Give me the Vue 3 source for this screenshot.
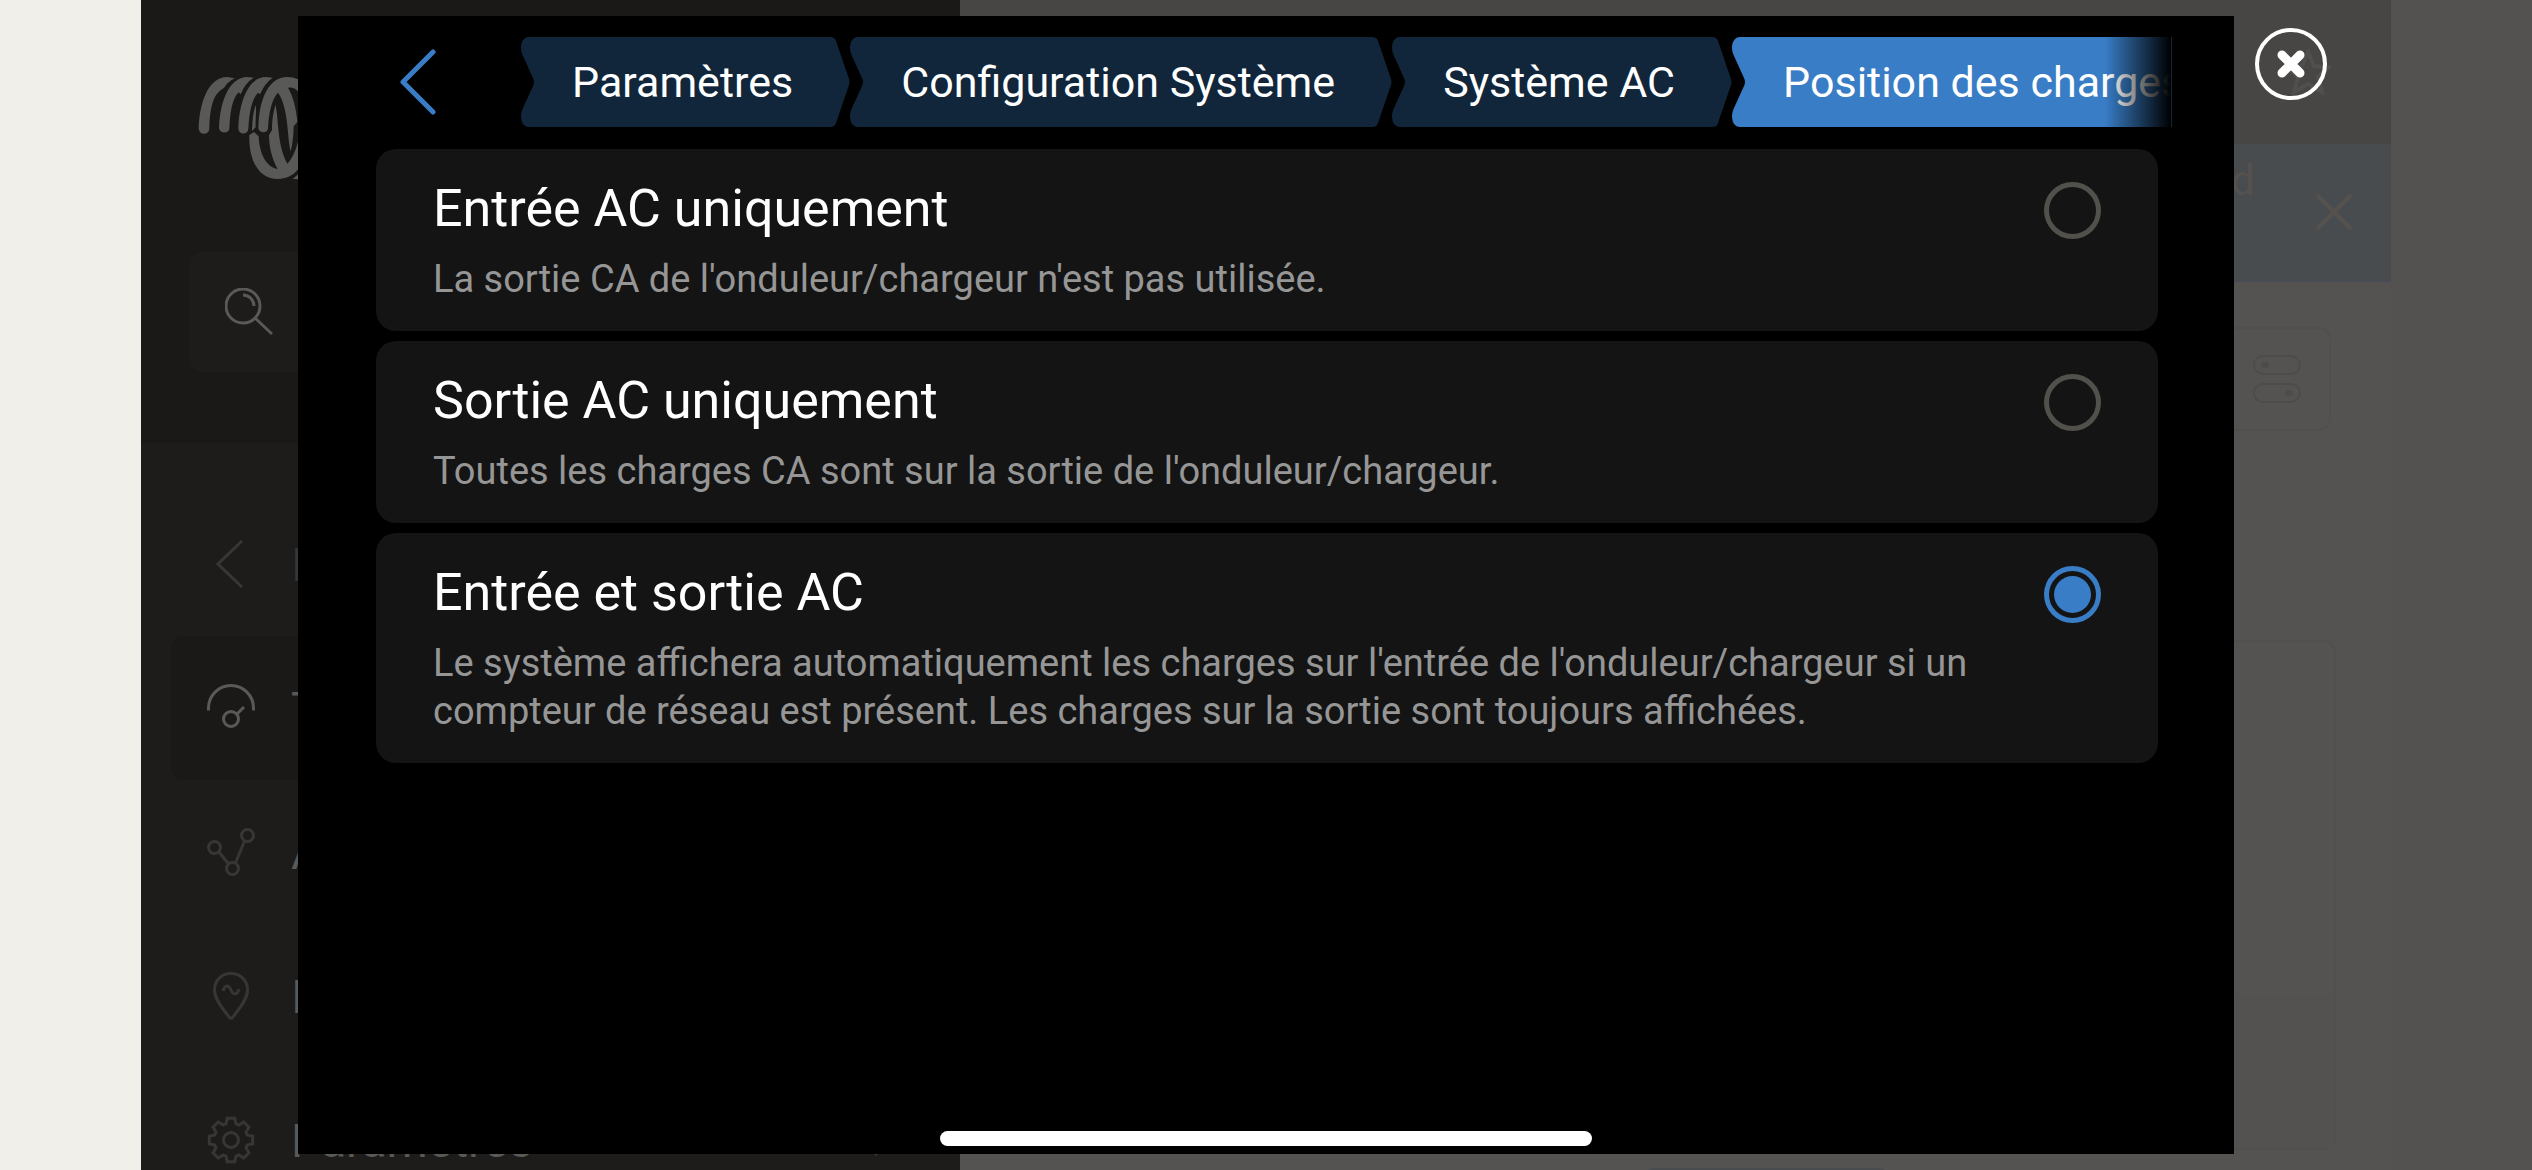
<script setup>
import { ref } from "vue";

const selected = ref("both");

const crumbs = [
  { label: "Paramètres" },
  { label: "Configuration Système" },
  { label: "Système AC" },
  { label: "Position des charges", active: true },
];

const options = [
  {
    value: "input",
    title: "Entrée AC uniquement",
    text: "La sortie CA de l'onduleur/chargeur n'est pas utilisée.",
  },
  {
    value: "output",
    title: "Sortie AC uniquement",
    text: "Toutes les charges CA sont sur la sortie de l'onduleur/chargeur.",
  },
  {
    value: "both",
    title: "Entrée et sortie AC",
    text: "Le système affichera automatiquement les charges sur l'entrée de l'onduleur/chargeur si un compteur de réseau est présent. Les charges sur la sortie sont toujours affichées.",
  },
];

const menu = [
  { icon: "back", label: "I", muted: true },
  { icon: "gauge", label: "T", active: true },
  { icon: "nodes", label: "A" },
  { icon: "pin", label: "I" },
  { icon: "gear", label: "Paramètres", expandable: true },
];

// outline of the eight-tooth settings wheel in a 48px box
const gearPath = (() => {
  const points = [];
  for (let i = 0; i < 8; i++) {
    const middle = (i * Math.PI) / 4;
    [
      [-0.3, 17],
      [-0.17, 22],
      [0.17, 22],
      [0.3, 17],
    ].forEach(([offset, radius]) => {
      const x = 24 + radius * Math.sin(middle + offset);
      const y = 24 - radius * Math.cos(middle + offset);
      points.push(`${x.toFixed(1)} ${y.toFixed(1)}`);
    });
  }
  return `M${points.join("L")}Z`;
})();
</script>

<template>
  <div class="screen">
    <!-- Dimmed page -->
    <div class="page">
      <div class="edge-left"></div>

      <aside class="sidebar">
        <div class="sidebar-top">
          <svg class="logo" viewBox="177 231 327 312" aria-hidden="true">
            <path d="M206 385C208 315 232 231 292 231L314 235Q292 246 282 264C246 282 240 330 238 386A16 16 0 0 1 206 385Z" />
            <path d="M267 385C269 315 293 231 353 231L371 233Q345 249 332 283L326 277C306 296 300 340 298 386A16 16 0 0 1 267 385Z" />
            <path d="M325 385C327 315 351 231 408 231L428 233Q404 250 390 283L384 278C364 300 358 340 355 386A15 15 0 0 1 325 385Z" />
            <path d="M385 385C387 300 414 231 472 231Q490 231 504 238V274Q492 260 474 263C489 288 499 325 502 366L491 379Q490 425 482 454C471 415 477 325 444 278C423 300 416 345 414 386A15 15 0 0 1 385 385Z" />
            <path d="M377 315C368 340 367 370 366 393L377 382C376 350 380 335 377 315Z" />
            <path d="M358 405L372 396L386 409C388 460 408 502 443 507C426 478 417 440 417 405L426 390C426 355 431 335 436 315C447 350 439 430 472 491Q492 470 504 425V508C490 527 468 537 443 537C385 537 356 480 358 405Z" />
            <path d="M488 537L504 523V538Z" />
          </svg>
          <label class="search">
            <svg class="icon" viewBox="0 0 48 48" aria-hidden="true">
              <circle cx="18" cy="18" r="17" />
              <path d="M18 7A11 11 0 0 1 29 18M30 30L47 46" />
            </svg>
            <input type="search" aria-label="Rechercher" />
          </label>
        </div>

        <nav class="menu">
          <a
            v-for="(item, index) in menu"
            :key="index"
            href="#"
            class="menu-item"
            :class="{ active: item.active, muted: item.muted }"
            @click.prevent
          >
            <svg class="icon" viewBox="0 0 48 48" aria-hidden="true">
              <path v-if="item.icon === 'back'" d="M35 1L11 24L35 47" />
              <g v-else-if="item.icon === 'gauge'">
                <path d="M1.5 26.5V24A22.5 22.5 0 0 1 46.5 24V26.5M30 30L37 23" />
                <circle cx="24" cy="35" r="7.5" />
              </g>
              <g v-else-if="item.icon === 'nodes'">
                <circle cx="7.5" cy="19.5" r="6" />
                <circle cx="25.5" cy="40.5" r="6" />
                <circle cx="40.5" cy="7.5" r="6" />
                <path d="M12 24L21.5 36M28.5 35L37.5 13" />
              </g>
              <g v-else-if="item.icon === 'pin'">
                <path d="M24 1.5C14 1.5 7.5 9 7.5 18C7.5 28 17 38 22 45Q24 47.5 26 45C31 38 40.5 28 40.5 18C40.5 9 34 1.5 24 1.5Z" />
                <path d="M16 19C18 12.5 21.5 12.5 24 18C26.5 23.5 30 23.5 32 17" />
              </g>
              <g v-else>
                <path :d="gearPath" />
                <circle cx="24" cy="24" r="7.5" />
              </g>
            </svg>
            <span class="menu-label">{{ item.label }}</span>
            <svg v-if="item.expandable" class="icon small" viewBox="0 0 36 36" aria-hidden="true">
              <path d="M4 18L18 32L32 18" />
            </svg>
          </a>
        </nav>
      </aside>

      <main class="main">
        <header class="main-header">
          <svg class="star" viewBox="0 0 46 46" aria-hidden="true">
            <path d="M23 3L29 17L44 18L33 28L37 43L23 35L9 43L13 28L2 18L17 17Z" />
          </svg>
        </header>
        <div class="banner">
          <span>d</span>
          <svg viewBox="0 0 38 38" aria-hidden="true">
            <path d="M2 2L36 36M36 2L2 36" />
          </svg>
        </div>
        <div class="toolbar">
          <div class="tool-box">
            <svg viewBox="0 0 48 48" aria-hidden="true">
              <rect x="1" y="1" width="46" height="18" rx="9" />
              <rect x="1" y="29" width="46" height="18" rx="9" />
              <ellipse class="dot" cx="12" cy="10" rx="4" ry="3" />
              <ellipse class="dot" cx="36" cy="38" rx="4" ry="3" />
            </svg>
          </div>
        </div>
        <div class="panel"><div class="panel-foot"></div></div>
        <div class="tab"></div>
      </main>

      <div class="edge-right"></div>
    </div>

    <!-- Remote console dialog -->
    <div class="overlay">
      <section class="dialog" role="dialog" aria-label="Position des charges">
        <header class="dialog-header">
          <button class="back" type="button" aria-label="Retour">
            <svg viewBox="0 0 36 66" aria-hidden="true">
              <path d="M33 3L3 33L33 63" />
            </svg>
          </button>
          <nav class="crumbs">
            <ol>
              <li v-for="crumb in crumbs" :key="crumb.label" :class="{ active: crumb.active }">
                <a href="#" @click.prevent>
                  <svg class="cap" viewBox="0 0 20 90" aria-hidden="true">
                    <path d="M8 0H20V90H8C2 90 0 84 0 79C0 76 1 73 2 71L12 49Q14 45 12 41L2 19C1 17 0 14 0 11C0 6 2 0 8 0Z" />
                  </svg>
                  <span>{{ crumb.label }}</span>
                  <svg class="cap" viewBox="0 0 20 90" aria-hidden="true">
                    <path d="M0 0C3 0 5 1 6 4L19 42Q20 45 19 48L6 86C5 89 3 90 0 90Z" />
                  </svg>
                </a>
              </li>
            </ol>
          </nav>
        </header>

        <div class="options">
          <label v-for="option in options" :key="option.value" class="option">
            <span class="option-body">
              <span class="option-title">{{ option.title }}</span>
              <span class="option-text">{{ option.text }}</span>
            </span>
            <input v-model="selected" type="radio" name="position" :value="option.value" />
          </label>
        </div>
      </section>

      <div class="overlay-side">
        <button class="close" type="button" aria-label="Fermer">
          <svg viewBox="0 0 72 72" aria-hidden="true">
            <circle cx="36" cy="36" r="34" />
            <path d="M27 27L45 45M45 27L27 45" />
          </svg>
        </button>
      </div>
    </div>

    <div class="home-indicator"></div>
  </div>
</template>

<style>
body {
  margin: 0;
}
</style>

<style scoped>
* {
  box-sizing: border-box;
}

.screen {
  position: relative;
  height: 100vh;
  overflow: hidden;
  font-family: Roboto, "Liberation Sans", sans-serif;
}

button {
  padding: 0;
  border: none;
  background: none;
  cursor: pointer;
}

a {
  color: inherit;
  text-decoration: none;
}

svg {
  display: block;
  flex: none;
  fill: none;
}

/* Dimmed page */
.page {
  display: flex;
  height: 100%;
}

.edge-left {
  width: 141px;
  background: #f0efea;
}

.edge-right {
  width: 141px;
  background: #545250;
}

.sidebar {
  width: 819px;
  background: #1e1c1a;
}

.sidebar-top {
  padding: 77px 48px 71px;
  background: #1a1917;
}

.logo {
  width: 109px;
  height: 104px;
  margin-bottom: 71px;
  fill: #595958;
}

.search {
  display: flex;
  align-items: center;
  height: 120px;
  padding: 0 36px;
  border-radius: 12px;
  background: #1e1c1a;
  color: #595958;
}

.search input {
  flex: 1;
  border: none;
  outline: none;
  background: none;
  color: inherit;
}

.icon {
  width: 48px;
  height: 48px;
  stroke: currentColor;
  stroke-width: 3px;
}

.icon.small {
  width: 36px;
  height: 36px;
}

.menu {
  padding: 49px 30px;
}

.menu-item {
  display: flex;
  align-items: center;
  gap: 36px;
  height: 144px;
  padding: 0 36px;
  border-radius: 12px;
  color: #363634;
}

.menu-item.active {
  background: #1a1917;
  color: #595958;
}

.menu-label {
  flex: 1;
  color: #595958;
  font-size: 47px;
}

.menu-item.muted .menu-label {
  color: #363634;
}

.main {
  flex: 1;
  background: #555351;
}

.main-header {
  display: flex;
  justify-content: flex-end;
  align-items: center;
  height: 144px;
  padding-right: 60px;
  background: #484644;
}

.star {
  width: 46px;
  height: 46px;
  stroke: #504f4d;
  stroke-width: 4px;
}

.banner {
  display: flex;
  justify-content: flex-end;
  align-items: center;
  gap: 60px;
  height: 138px;
  padding-right: 38px;
  border-bottom: 2px solid #474b52;
  background: #484c4e;
  color: #55514f;
  font-size: 42px;
}

.banner span {
  align-self: flex-start;
  padding-top: 12px;
}

.banner svg {
  width: 38px;
  height: 38px;
  stroke: #55514f;
  stroke-width: 4px;
}

.toolbar {
  display: flex;
  justify-content: flex-end;
  padding: 45px 60px 0;
}

.tool-box {
  display: flex;
  justify-content: flex-end;
  align-items: center;
  width: 300px;
  height: 104px;
  padding-right: 28px;
  border: 2px solid #51504d;
  border-radius: 12px;
}

.tool-box svg {
  width: 48px;
  height: 48px;
  stroke: #4d4c49;
  stroke-width: 2px;
}

.tool-box .dot {
  fill: #4d4c49;
  stroke: none;
}

.panel {
  display: flex;
  align-items: flex-end;
  height: 510px;
  margin: 209px 55px 18px;
  border: 2px solid #51504d;
  border-radius: 12px;
}

.panel-foot {
  flex: 1;
  height: 152px;
  background: #535250;
}

.tab {
  width: 248px;
  height: 60px;
  margin-left: 682px;
  border-radius: 12px;
  background: #484c4e;
}

/* Dialog */
.overlay {
  position: absolute;
  inset: 0;
  display: flex;
  padding: 16px 0 16px 298px;
}

.dialog {
  flex: 1;
  min-width: 0;
  background: #000;
}

.dialog-header {
  display: flex;
  gap: 62px;
  padding: 21px 62px 22px 78px;
}

.back {
  display: flex;
  flex: none;
  justify-content: center;
  align-items: center;
  width: 83px;
}

.back svg {
  width: 36px;
  height: 66px;
  stroke: #387dc5;
  stroke-width: 5px;
  stroke-linecap: round;
  stroke-linejoin: round;
}

.crumbs {
  position: relative;
  flex: 1;
  min-width: 0;
  overflow: hidden;
}

/* fade at the scrolled edge */
.crumbs::after {
  content: "";
  position: absolute;
  top: 0;
  right: 0;
  width: 66px;
  height: 100%;
  border-right: 1px solid #11263b;
  background: linear-gradient(to right, transparent, #000);
}

.crumbs ol {
  display: flex;
  margin: 0;
  padding: 0;
  list-style: none;
}

.crumbs li {
  flex: none;
  color: #11263b;
}

.crumbs li.active {
  color: #387dc5;
}

.crumbs a {
  display: flex;
}

.crumbs span {
  margin: 0 -1px;
  padding: 1px 38px 0 32px;
  background: currentColor;
  font-size: 43px;
  line-height: 89px;
  white-space: nowrap;
  -webkit-text-fill-color: #fff;
}

.cap {
  width: 20px;
  height: 90px;
  fill: currentColor;
}

.options {
  display: flex;
  flex-direction: column;
  gap: 10px;
  padding: 0 76px 0 78px;
}

.option {
  display: flex;
  align-items: flex-start;
  gap: 24px;
  padding: 30px 57px 28px;
  border-radius: 20px;
  background: #141414;
  cursor: pointer;
}

.option-body {
  display: flex;
  flex: 1;
  flex-direction: column;
  gap: 16px;
}

.option-title {
  color: #fff;
  font-size: 52px;
  line-height: 60px;
}

.option-text {
  color: #969696;
  font-size: 38px;
  line-height: 48px;
}

.option input {
  appearance: none;
  flex: none;
  width: 57px;
  height: 57px;
  margin: 3px 0 0;
  border: 5px solid #51504b;
  border-radius: 50%;
  cursor: pointer;
}

.option input:checked {
  padding: 5px;
  border-color: #387dc5;
  background: #387dc5 content-box;
}

.overlay-side {
  width: 298px;
  padding: 12px 21px;
}

.close svg {
  width: 72px;
  height: 72px;
  stroke: #fff;
  stroke-width: 4px;
}

.close path {
  stroke-width: 9px;
  stroke-linecap: round;
}

.home-indicator {
  position: absolute;
  bottom: 24px;
  left: 50%;
  width: 652px;
  height: 15px;
  border-radius: 8px;
  background: #fff;
  transform: translateX(-50%);
}
</style>
